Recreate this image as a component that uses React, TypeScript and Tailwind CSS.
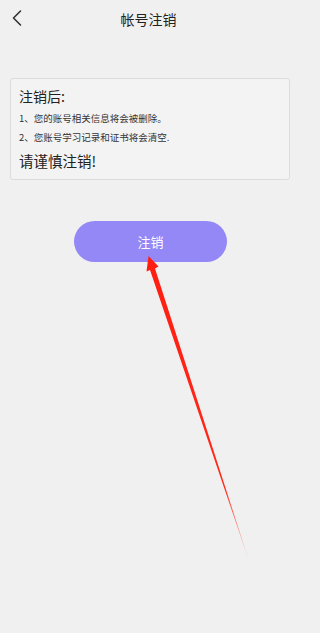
export default function App() {
  return (
    <div className="min-h-[633px] w-full bg-[#f0f0f0]">
      <div
        className="relative min-h-[633px] w-[297px] overflow-hidden bg-[#f0f0f0] text-[#222]"
        style={{ fontFamily: '"Noto Sans CJK SC", "Noto Sans", sans-serif' }}
      >
        {/* header */}
        <div className="relative flex h-[38px] items-center justify-center">
          <button className="absolute left-[7px] top-[8px] flex h-5 w-5 items-center justify-center text-[#333]">
            <svg width="12" height="18" viewBox="0 0 12 18" fill="none">
              <path d="M9.5 2 L2.5 9 L9.5 16" stroke="currentColor" strokeWidth="1.6" strokeLinecap="round" strokeLinejoin="round" />
            </svg>
          </button>
          <h1 className="text-[14px] leading-none text-[#222]">帐号注销</h1>
        </div>

        {/* notice card */}
        <div className="ml-[10px] mr-[7px] mt-[40px] rounded-[3px] border border-[#dcdcdc] bg-[#f3f3f3] px-[8px] pb-[7px] pt-[7px]">
          <p className="text-[14px] leading-[20px]">注销后:</p>
          <p className="mt-[5px] text-[9.5px] leading-[14px] text-[#333]">1、您的账号相关信息将会被删除。</p>
          <p className="mt-[5px] text-[9.5px] leading-[14px] text-[#333]">2、您账号学习记录和证书将会清空.</p>
          <p className="mt-[6px] text-[14.5px] leading-[22px]">请谨慎注销!</p>
        </div>

        {/* button */}
        <div className="mt-[41px] flex justify-center pl-[4px]">
          <button className="h-[41px] w-[153px] rounded-full bg-[#9488f6] text-[13px] text-white">注销</button>
        </div>

        {/* red annotation arrow */}
        <svg className="pointer-events-none absolute left-0 top-0" width="297" height="633" viewBox="0 0 297 633">
          <defs>
            <linearGradient id="fade" x1="148" y1="256" x2="250" y2="564" gradientUnits="userSpaceOnUse">
              <stop offset="0" stopColor="#ff1e12" />
              <stop offset="0.75" stopColor="#ff2a1a" />
              <stop offset="1" stopColor="#ff2a1a" stopOpacity="0.1" />
            </linearGradient>
          </defs>
          <polygon
            points="148.5,256 158.5,266.5 155,268.5 250,564 150,270 146.5,271.5"
            fill="url(#fade)"
          />
        </svg>
      </div>
    </div>
  )
}
